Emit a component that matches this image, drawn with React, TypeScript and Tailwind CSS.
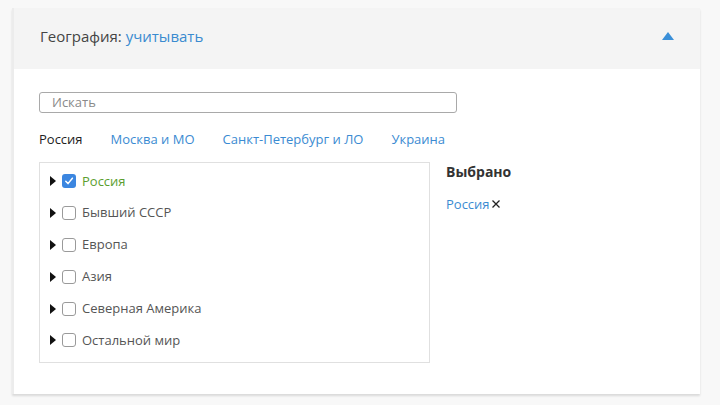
import { useState } from "react";

const REGIONS = ["Россия", "Бывший СССР", "Европа", "Азия", "Северная Америка", "Остальной мир"];
const TABS = ["Россия", "Москва и МО", "Санкт-Петербург и ЛО", "Украина"];

function Checkbox({ checked }: { checked: boolean }) {
  if (checked) {
    return (
      <span className="flex h-[14px] w-[14px] items-center justify-center rounded-[3px] bg-[#3b86e0]">
        <svg width="10" height="10" viewBox="0 0 10 10" fill="none">
          <path d="M1.8 5.2 4 7.6 8.4 2.2" stroke="#fff" strokeWidth="1.5" strokeLinecap="round" strokeLinejoin="round" />
        </svg>
      </span>
    );
  }
  return <span className="h-[14px] w-[14px] rounded-[3px] border border-[#9a9a9a] bg-white" />;
}

export default function App() {
  const [selected] = useState<string[]>(["Россия"]);

  return (
    <div className="min-h-[405px] w-[720px] bg-[#f8f8f8] pt-[8px] pl-[12px] font-['Open_Sans',sans-serif]">
      <div className="w-[688px] border-l-2 border-[#ececec] bg-white shadow-[0_2px_2px_rgba(0,0,0,0.12)]">
        {/* Header */}
        <div className="flex h-[61px] items-center justify-between bg-[#f4f4f4] pb-[5px] pl-[26px] pr-[26px]">
          <div className="text-[15px] text-[#444]">
            География: <span className="text-[#3a8bd0]">учитывать</span>
          </div>
          <svg width="12" height="8" viewBox="0 0 12 8">
            <path d="M6 0 12 8H0Z" fill="#3a8fd8" />
          </svg>
        </div>

        {/* Body */}
        <div className="pl-[25px] pt-[23px] pb-[31px]">
          <div className="flex h-[21px] w-[418px] items-center rounded-[3px] border border-[#a9a9a9] pl-[12px] text-[13px] text-[#8a8a8a]">
            Искать
          </div>

          <div className="mt-[17px] flex gap-[28px] text-[13px]">
            {TABS.map((t, i) => (
              <span key={t} className={i === 0 ? "text-[#222]" : "text-[#3b8bd2]"}>
                {t}
              </span>
            ))}
          </div>

          <div className="mt-[12px] flex">
            <div className="w-[391px] border border-[#e0e0e0] pt-[3px] pb-[6px] pl-[10px]">
              {REGIONS.map((r) => {
                const checked = selected.includes(r);
                return (
                  <div key={r} className="flex h-[31.8px] items-center">
                    <svg width="6" height="10" viewBox="0 0 6 10" className="mr-[6px]">
                      <path d="M0 0 6 5 0 10Z" fill="#111" />
                    </svg>
                    <Checkbox checked={checked} />
                    <span className={`ml-[6px] text-[13px] ${checked ? "text-[#5c9e2f]" : "text-[#555]"}`}>{r}</span>
                  </div>
                );
              })}
            </div>

            <div className="ml-[16px] -mt-[1px]">
              <div className="text-[14px] font-bold text-[#333]">Выбрано</div>
              <div className="mt-[13px] flex items-center text-[13px]">
                {selected.map((s) => (
                  <span key={s} className="flex items-center">
                    <span className="text-[#3b8bd2]">{s}</span>
                    <svg width="10" height="10" viewBox="0 0 10 10" className="ml-[1px]">
                      <path d="M1.5 1.5 8.5 8.5M8.5 1.5 1.5 8.5" stroke="#222" strokeWidth="1.3" />
                    </svg>
                  </span>
                ))}
              </div>
            </div>
          </div>
        </div>
      </div>
    </div>
  );
}
